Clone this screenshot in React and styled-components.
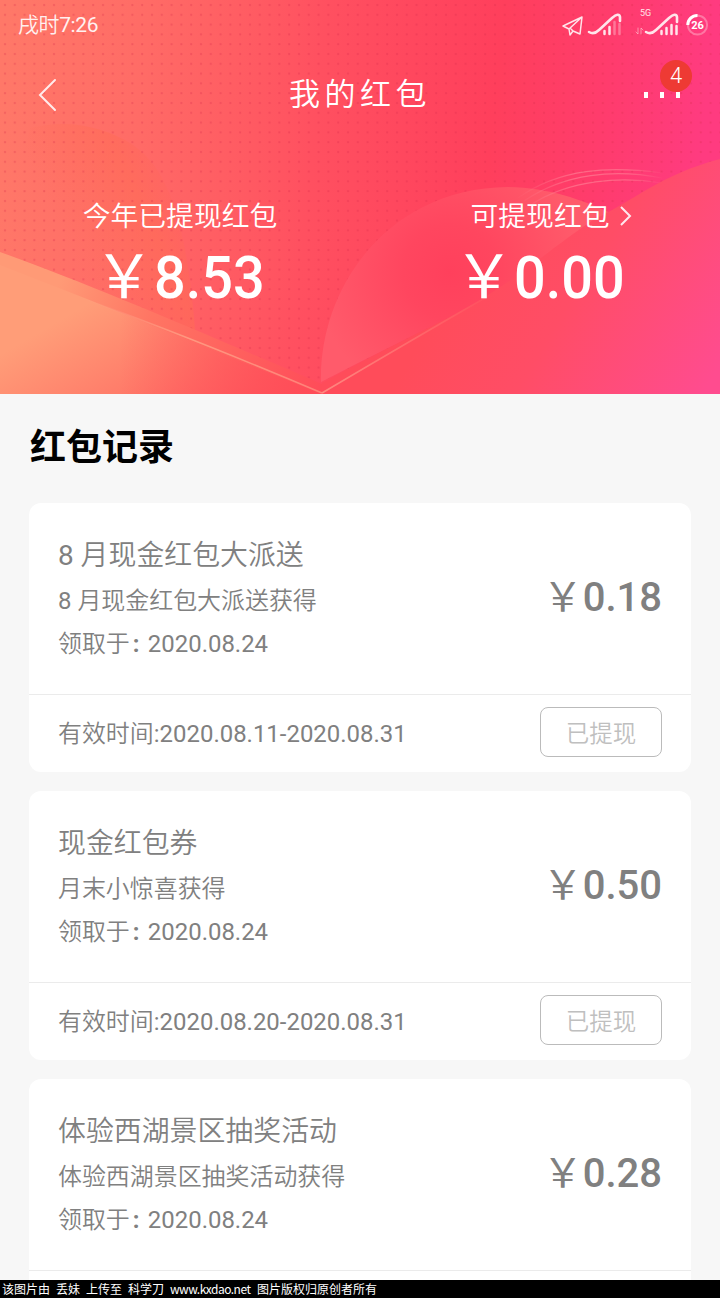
import React from 'react';
import styled, { createGlobalStyle } from 'styled-components';

const GlobalStyle = createGlobalStyle`
  * {
    box-sizing: border-box;
  }

  body {
    margin: 0;
    background: #f7f7f7;
    font-family: Roboto, 'Noto Sans CJK SC', sans-serif;
  }
`;

const Page = styled.div`
  width: 720px;
  height: 1298px;
  display: flex;
  flex-direction: column;
  overflow: hidden;
  background: #f7f7f7;
`;

const Hero = styled.header`
  position: relative;
  flex: none;
  height: 394px;
  display: flex;
  flex-direction: column;
  overflow: hidden;
  color: #fff;
  background: #ff505e;
`;

const Backdrop = styled.svg`
  position: absolute;
  inset: 0;
  width: 720px;
  height: 394px;
`;

const StatusBar = styled.div`
  position: relative;
  display: flex;
  justify-content: space-between;
  height: 50px;
  padding-left: 18px;
`;

const Clock = styled.span`
  font-size: 21px;
  font-weight: 350;
  line-height: 50px;
  letter-spacing: -0.4px;
  opacity: 0.9;
`;

const StatusIcons = styled.svg`
  width: 164px;
  height: 50px;
  font-family: Roboto, sans-serif;
`;

const NavBar = styled.div`
  position: relative;
  display: grid;
  grid-template-columns: 90px 1fr 90px;
  align-items: center;
  height: 90px;
`;

const BackIcon = styled.svg`
  width: 20px;
  height: 34px;
  margin-left: 38px;
`;

const Title = styled.h1`
  margin: 0;
  text-align: center;
  font-size: 31px;
  font-weight: 350;
  line-height: 40px;
  letter-spacing: 4.5px;
`;

const More = styled.div`
  position: relative;
  display: flex;
  gap: 12px;
  padding-left: 14px;
`;

const Dot = styled.i`
  width: 4px;
  height: 6px;
  background: #fff;
`;

const Badge = styled.span`
  position: absolute;
  left: 30px;
  top: -32px;
  width: 32px;
  height: 32px;
  border-radius: 50%;
  background: #ee3a34;
  font-size: 22px;
  font-weight: 300;
  line-height: 32px;
  text-align: center;
`;

const Totals = styled.div`
  position: relative;
  display: grid;
  grid-template-columns: 1fr 1fr;
  padding-top: 56px;
`;

const Total = styled.div`
  display: flex;
  flex-direction: column;
  align-items: center;
`;

const TotalLabel = styled.div`
  display: flex;
  align-items: center;
  gap: 9px;
  height: 40px;
  padding-left: ${(p) => (p.$link ? '22px' : '0')};
  font-size: 27.8px;
  font-weight: 350;

  span {
    padding-bottom: 4px;
  }
`;

const TotalValue = styled.div`
  display: flex;
  align-items: center;
  width: 172px;
  height: 80px;
  margin-top: 1px;
  font-size: 60px;
`;

const Yen = styled.span`
  flex: none;
  width: 1em;
  padding-bottom: 0.17em;
  font-family: 'Noto Sans CJK SC', sans-serif;
  font-weight: 400;
`;

const BigNumber = styled.span`
  font-weight: 500;
  transform: scaleX(0.93);
  transform-origin: left;
`;

const Content = styled.main`
  flex: 1;
  min-height: 0;
  overflow: hidden;
  padding: 0 29px;
`;

const Heading = styled.h2`
  height: 109px;
  margin: 0;
  padding-left: 1px;
  font-size: 36px;
  font-weight: 700;
  line-height: 109px;
  color: #000;
`;

const Card = styled.section`
  height: 269px;
  margin-bottom: 19px;
  border-radius: 12px;
  background: #fff;
  color: #808080;
`;

const CardMain = styled.div`
  display: flex;
  justify-content: space-between;
  height: 192px;
  padding: 32px 29px 0;
  border-bottom: 1px solid #ebebeb;
`;

const CardTitle = styled.div`
  font-size: 27.9px;
  font-weight: 350;
  line-height: 42px;
`;

const CardText = styled.div`
  font-size: 23.95px;
  font-weight: 350;
  line-height: 43px;
  padding-top: ${(p) => p.$gap || 0}px;
`;

const Num = styled.span`
  font-weight: 400;
`;

const Colon = styled.span`
  display: inline-block;
  width: 18px;
  padding-left: 3px;
  font-weight: 700;
`;

const Amount = styled.div`
  display: flex;
  align-items: center;
  height: 60px;
  margin-top: 32px;
  font-size: 40px;
  font-weight: 500;
`;

const CardFoot = styled.div`
  display: flex;
  align-items: center;
  justify-content: space-between;
  height: 74px;
  padding: 0 29px;
  font-size: 23.95px;
  font-weight: 350;

  > span {
    padding-bottom: 2px;
  }
`;

const Status = styled.button`
  width: 122px;
  height: 50px;
  padding: 0;
  border: 1px solid #bbb;
  border-radius: 8px;
  background: #fff;
  font-family: inherit;
  font-size: 23.5px;
  font-weight: 350;
  color: #bfbfbf;
`;

const Credit = styled.footer`
  flex: none;
  height: 18px;
  padding-left: 2px;
  background: #000;
  color: #fff;
  font-family: 'Noto Sans CJK SC', sans-serif;
  font-size: 12px;
  line-height: 17px;
  white-space: nowrap;
`;

const CreditWord = styled.span`
  display: inline-block;
  width: ${(p) => p.$w}px;
  letter-spacing: ${(p) => (p.$tight ? '-0.5px' : '0')};
`;

// the last record runs under the bottom edge, so its footer never shows
const records = [
  {
    title: '8 月现金红包大派送',
    source: '8 月现金红包大派送获得',
    date: '2020.08.24',
    valid: '2020.08.11-2020.08.31',
    amount: '0.18',
  },
  {
    title: '现金红包券',
    source: '月末小惊喜获得',
    date: '2020.08.24',
    valid: '2020.08.20-2020.08.31',
    amount: '0.50',
  },
  {
    title: '体验西湖景区抽奖活动',
    source: '体验西湖景区抽奖活动获得',
    date: '2020.08.24',
    amount: '0.28',
  },
];

const HeroArt = () => (
  <Backdrop viewBox="0 0 720 394">
    <defs>
      <linearGradient id="base" gradientUnits="userSpaceOnUse" x1="0" y1="100" x2="700" y2="170">
        <stop offset="0" stopColor="#ff7868" />
        <stop offset="0.2" stopColor="#ff6b66" />
        <stop offset="0.45" stopColor="#ff5060" />
        <stop offset="0.7" stopColor="#ff3f5c" />
        <stop offset="0.85" stopColor="#ff3c6c" />
        <stop offset="1" stopColor="#ff3b80" />
      </linearGradient>
      <pattern id="dots" width="9.8" height="9.8" patternUnits="userSpaceOnUse">
        <rect x="4" y="4" width="2" height="2" fill="#d8284a" opacity="0.3" />
      </pattern>
      <linearGradient id="glow" gradientUnits="userSpaceOnUse" x1="60" y1="230" x2="170" y2="180">
        <stop offset="0" stopColor="#ff7055" stopOpacity="0" />
        <stop offset="0.7" stopColor="#ff6c55" stopOpacity="0.55" />
        <stop offset="1" stopColor="#ff6555" stopOpacity="0.15" />
      </linearGradient>
      <linearGradient id="leftFold" gradientUnits="userSpaceOnUse" x1="60" y1="320" x2="165" y2="500">
        <stop offset="0" stopColor="#ff9d78" />
        <stop offset="0.5" stopColor="#ff7868" />
        <stop offset="1" stopColor="#ff505a" />
      </linearGradient>
      <linearGradient id="leftBand" gradientUnits="userSpaceOnUse" x1="60" y1="280" x2="320" y2="390">
        <stop offset="0" stopColor="#ff9a76" />
        <stop offset="0.35" stopColor="#ff7563" />
        <stop offset="1" stopColor="#ff4c59" />
      </linearGradient>
      <linearGradient id="leftFade" gradientUnits="userSpaceOnUse" x1="120" y1="0" x2="320" y2="0">
        <stop offset="0" stopColor="#ff4c58" stopOpacity="0" />
        <stop offset="1" stopColor="#ff4c58" />
      </linearGradient>
      <linearGradient id="rightFold" gradientUnits="userSpaceOnUse" x1="470" y1="260" x2="700" y2="400">
        <stop offset="0" stopColor="#ff4c5a" />
        <stop offset="0.4" stopColor="#ff4d66" />
        <stop offset="1" stopColor="#ff4c8f" />
      </linearGradient>
      <radialGradient id="disc" gradientUnits="userSpaceOnUse" cx="450" cy="272" r="135">
        <stop offset="0" stopColor="#ff405c" />
        <stop offset="0.35" stopColor="#ff465f" />
        <stop offset="1" stopColor="#ff5b6b" />
      </radialGradient>
      <linearGradient id="arc" gradientUnits="userSpaceOnUse" x1="515" y1="0" x2="665" y2="0">
        <stop offset="0" stopColor="#ff8090" stopOpacity="0" />
        <stop offset="0.4" stopColor="#ff8095" stopOpacity="0.65" />
        <stop offset="0.75" stopColor="#ff8095" stopOpacity="0.6" />
        <stop offset="1" stopColor="#ff8095" stopOpacity="0" />
      </linearGradient>
      <linearGradient id="leftEdge" gradientUnits="userSpaceOnUse" x1="80" y1="295" x2="322" y2="393">
        <stop offset="0" stopColor="#ffa083" stopOpacity="0" />
        <stop offset="0.45" stopColor="#ff9880" />
        <stop offset="1" stopColor="#ff8078" />
      </linearGradient>
      <linearGradient id="rightEdge" gradientUnits="userSpaceOnUse" x1="322" y1="393" x2="500" y2="290">
        <stop offset="0" stopColor="#ff8880" />
        <stop offset="1" stopColor="#ff8078" stopOpacity="0" />
      </linearGradient>
    </defs>
    <rect width="720" height="394" fill="url(#base)" />
    <path d="M30 128 C70 118 105 128 130 143 C160 162 185 200 195 330 L0 260Z" fill="url(#glow)" />
    <rect width="720" height="394" fill="url(#dots)" />
    <path d="M321 382 C319 285 390 188 508 187 C550 188 580 199 613 214 L480 302 L360 362Z" fill="url(#disc)" />
    <path d="M518 198 C560 168 610 166 662 173" fill="none" stroke="url(#arc)" strokeWidth="1.2" />
    <path d="M524 201 C565 173 615 169 662 178" fill="none" stroke="url(#arc)" strokeWidth="1.2" />
    <path d="M532 204 C570 180 620 176 662 183" fill="none" stroke="url(#arc)" strokeWidth="1.2" />
    <path d="M0 252 C90 284 210 336 322 384 L322 394 L0 394Z" fill="url(#leftBand)" />
    <path d="M0 265 L87 299 L322 394 L0 394Z" fill="url(#leftFold)" />
    <path d="M87 299 L322 394 L87 394Z" fill="url(#leftFade)" />
    <path
      d="M322 383 C390 346 445 321 480 300 C525 273 550 249 593 220 C635 200 660 175 720 159 L720 394 L322 394Z"
      fill="url(#rightFold)"
    />
    <path d="M82 298 Q190 337 322 393" fill="none" stroke="url(#leftEdge)" strokeWidth="1.5" />
    <path d="M322 393 Q410 341 490 295" fill="none" stroke="url(#rightEdge)" strokeWidth="1.5" />
  </Backdrop>
);

const StatusArt = () => (
  <StatusIcons viewBox="556 0 164 50" fill="none" stroke="#ffe4ea" strokeLinecap="round" strokeLinejoin="round">
    <path d="M563 26 L582 17 L580 34 L573 31 L570 35 L569 29Z M569 29 L582 17 M573 31 L571 29" strokeWidth="1.5" />
    <path d="M589 32 Q594 35 599 30 L612 18 Q619 12 620 17 V21" strokeWidth="2.6" />
    <path d="M604.5 31 V34 M609.5 27 V34" strokeWidth="2.5" />
    <path d="M614.5 22 V34 M619.5 24 V34" strokeWidth="2.5" opacity="0.35" />
    <text x="640" y="16" fontSize="9" fill="#ffe4ea" stroke="none">5G</text>
    <path d="M638 28 V34 L636 32 M641 34 V28 L643 30" strokeWidth="1" opacity="0.5" />
    <path d="M646 32 Q651 35 656 30 L669 18 Q676 12 677 17 V22" strokeWidth="2.6" />
    <path d="M661.5 31 V34 M666.5 28 V34 M671.5 25 V34 M676.5 26 V34" strokeWidth="2.5" />
    <circle cx="697.5" cy="25" r="9.6" strokeWidth="2" opacity="0.35" />
    <path d="M687.8 25 A9.6 9.6 0 0 1 697.5 15.4" strokeWidth="3" stroke="#fff" strokeLinecap="butt" />
    <text x="697.5" y="29" fontSize="11" fontWeight="700" textAnchor="middle" fill="#fff" stroke="none">26</text>
  </StatusIcons>
);

// digits are set a little heavier than the characters around them
const mixed = (text) =>
  text.split(/(\d[\d.\- ]*)/).map((part, i) => (i % 2 ? <Num key={i}>{part}</Num> : part));

const Record = ({ item }) => (
  <Card>
    <CardMain>
      <div>
        <CardTitle>{mixed(item.title)}</CardTitle>
        <CardText $gap={3}>{mixed(item.source)}</CardText>
        <CardText>
          领取于<Colon>:</Colon>
          <Num>{item.date}</Num>
        </CardText>
      </div>
      <Amount>
        <Yen>￥</Yen>
        {item.amount}
      </Amount>
    </CardMain>
    {item.valid && (
      <CardFoot>
        <span>
          有效时间<Num>:{item.valid}</Num>
        </span>
        <Status>已提现</Status>
      </CardFoot>
    )}
  </Card>
);

const App = () => {
  return (
    <Page>
      <GlobalStyle />
      <Hero>
        <HeroArt />
        <StatusBar>
          <Clock>
            戌时<Num>7:26</Num>
          </Clock>
          <StatusArt />
        </StatusBar>
        <NavBar>
          <BackIcon viewBox="0 0 20 34" fill="none" stroke="#ffecec" strokeWidth="2" strokeLinecap="round">
            <path d="M17 2 L2 17 L17 32" />
          </BackIcon>
          <Title>我的红包</Title>
          <More>
            <Dot />
            <Dot />
            <Dot />
            <Badge>4</Badge>
          </More>
        </NavBar>
        <Totals>
          <Total>
            <TotalLabel>
              <span>今年已提现红包</span>
            </TotalLabel>
            <TotalValue>
              <Yen>￥</Yen>
              <BigNumber>8.53</BigNumber>
            </TotalValue>
          </Total>
          <Total>
            <TotalLabel $link>
              <span>可提现红包</span>
              <svg width="13" height="20" viewBox="0 0 13 20" fill="none" stroke="#ffe8ee" strokeWidth="2">
                <path d="M2 1 L11 10 L2 19" />
              </svg>
            </TotalLabel>
            <TotalValue>
              <Yen>￥</Yen>
              <BigNumber>0.00</BigNumber>
            </TotalValue>
          </Total>
        </Totals>
      </Hero>
      <Content>
        <Heading>红包记录</Heading>
        {records.map((item) => (
          <Record key={item.title} item={item} />
        ))}
      </Content>
      <Credit>
        <CreditWord $w={54}>该图片由</CreditWord>
        <CreditWord $w={30}>丢妹</CreditWord>
        <CreditWord $w={42}>上传至</CreditWord>
        <CreditWord $w={42}>科学刀</CreditWord>
        <CreditWord $w={87} $tight>www.kxdao.net</CreditWord>
        <CreditWord $w={120}>图片版权归原创者所有</CreditWord>
      </Credit>
    </Page>
  );
};

export default App;
